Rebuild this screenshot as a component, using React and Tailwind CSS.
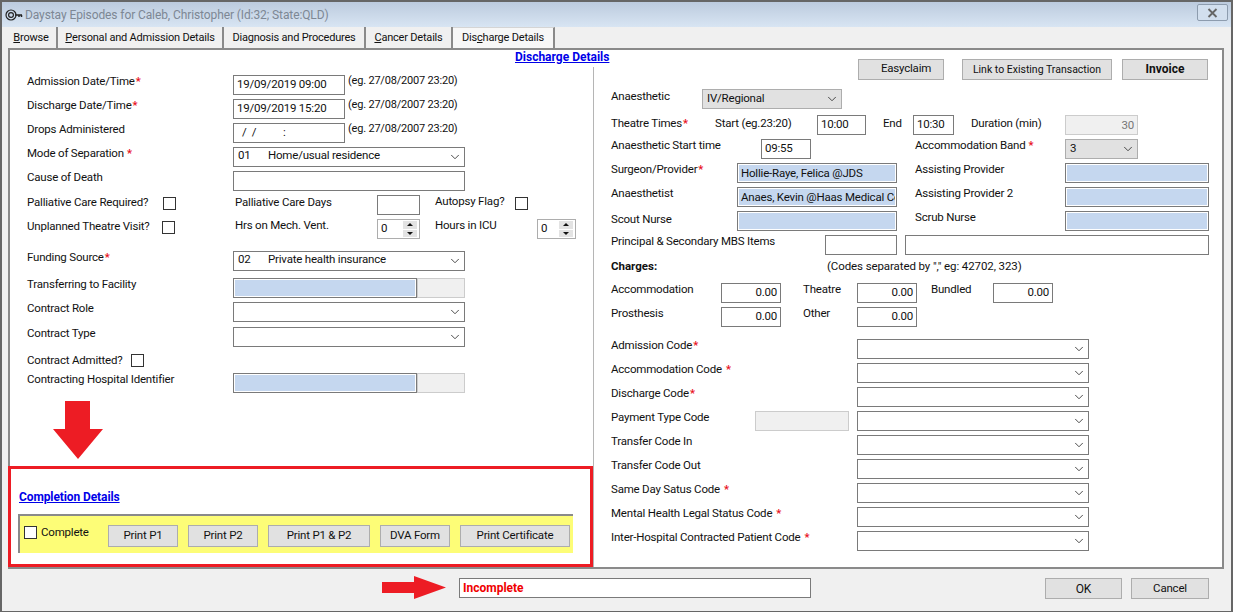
import React from 'react'
import { ChevronDown } from 'lucide-react'

const Star = () => <span className="text-[#e8101c] font-bold text-[11px]">*</span>

const Label = ({ className = '', children, star, gap = 'ml-[1px]' }) => (
  <div className={`shrink-0 -mt-[1px] leading-[15px] whitespace-nowrap ${className}`}>
    {children}
    {star && <span className={gap}><Star /></span>}
  </div>
)

const Input = ({ className = '', children, right }) => (
  <div className={`shrink-0 h-[20px] bg-white border border-[#7a7a7a] leading-[17px] px-[3px] whitespace-nowrap overflow-hidden ${right ? 'text-right' : ''} ${className}`}>
    {children}
  </div>
)

const Picker = ({ className = '', gray, children }) => (
  <div className={`shrink-0 h-[20px] flex items-center justify-between pl-[4px] pr-[2px] border ${gray ? 'bg-[#e1e1e1] border-[#adadad]' : 'bg-white border-[#7a7a7a]'} ${className}`}>
    <span className={`whitespace-nowrap flex ${gray ? '' : '-mt-[2px]'}`}>{children}</span>
    <ChevronDown size={14} strokeWidth={1.5} className="text-[#333]" />
  </div>
)

const Lookup = ({ className = '', children }) => (
  <div className={`shrink-0 h-[20px] bg-[#c5d7ef] border border-[#7a7a7a] outline outline-1 -outline-offset-2 outline-white leading-[19px] px-[3px] whitespace-nowrap overflow-hidden ${className}`}>
    {children}
  </div>
)

const Disabled = ({ className = '', children }) => (
  <div className={`shrink-0 h-[20px] bg-[#f0f0f0] border border-[#cccccc] leading-[18px] px-[3px] text-right text-[#777] ${className}`}>
    {children}
  </div>
)

const Check = ({ className = '' }) => (
  <div className={`shrink-0 w-[13px] h-[13px] bg-white border border-[#333] ${className}`} />
)

const Spinner = ({ className = '' }) => (
  <div className={`shrink-0 h-[20px] flex items-center justify-between bg-white border border-[#adadad] pl-[3px] pr-[2px] ${className}`}>
    <span>0</span>
    <div className="flex flex-col gap-[1px]">
      <div className="w-[14px] h-[7.5px] bg-[#e3e3e3] flex items-center justify-center">
        <svg width="6" height="3" viewBox="0 0 6 3"><path d="M3 0L6 3H0z" fill="#111" /></svg>
      </div>
      <div className="w-[14px] h-[7.5px] bg-[#e3e3e3] flex items-center justify-center">
        <svg width="6" height="3" viewBox="0 0 6 3"><path d="M3 3L6 0H0z" fill="#111" /></svg>
      </div>
    </div>
  </div>
)

const Btn = ({ className = '', children }) => (
  <div className={`shrink-0 flex items-center justify-center bg-[#e1e1e1] border border-[#adadad] whitespace-nowrap ${className}`}>
    {children}
  </div>
)

const Tab = ({ active, className = '', children }) => (
  <div className={`h-[21px] pt-[1px] flex items-center justify-center border-r-2 border-[#8a8a8a] whitespace-nowrap text-[11px] ${active ? 'bg-[#f7f7f7] border-t border-t-[#d5d5d5]' : 'bg-[#f0f0f0]'} ${className}`}>
    {children}
  </div>
)

const Row = ({ className = '', children }) => (
  <div className={`flex items-start h-[20px] ${className}`}>{children}</div>
)

const codeRows = [
  { label: 'Admission Code', star: true },
  { label: 'Accommodation Code', star: true, gap: 'ml-[4px]' },
  { label: 'Discharge Code', star: true },
  { label: 'Payment Type Code', box: true },
  { label: 'Transfer Code In' },
  { label: 'Transfer Code Out' },
  { label: 'Same Day Satus Code', star: true, gap: 'ml-[4px]' },
  { label: 'Mental Health Legal Status Code', star: true, gap: 'ml-[4px]' },
  { label: 'Inter-Hospital Contracted Patient Code', star: true, gap: 'ml-[4px]' },
]

const Example = () => <span className="ml-[3px] -mt-[1px] leading-[14px] text-[11px]">(eg. 27/08/2007 23:20)</span>

export default function App() {
  return (
    <div className="relative w-[1233px] h-[612px] overflow-hidden bg-[#f0f0f0] border-2 border-[#666] border-b-[1px] text-[11.5px] tracking-[-0.2px] text-[#111] flex flex-col font-['Roboto',Arial,sans-serif]">
      {/* Title bar */}
      <div className="h-[25px] shrink-0 flex items-center justify-between pl-[3px] pr-[3px] bg-gradient-to-b from-[#bccbde] to-[#d8e5f3]">
        <div className="flex items-center gap-[2px]">
          <svg width="18" height="12" viewBox="0 0 18 12" fill="none" stroke="#222">
            <circle cx="6" cy="6" r="5" strokeWidth="1.2" />
            <circle cx="6" cy="6" r="2.4" strokeWidth="1.2" />
            <path d="M10 6h7M14 6v2M16.5 6v2" strokeWidth="1.5" />
          </svg>
          <span className="text-[#7d8794] text-[12px] tracking-[-0.1px]">Daystay Episodes for Caleb, Christopher (Id:32; State:QLD)</span>
        </div>
        <div className="w-[31px] h-[17px] mt-[-4px] flex items-center justify-center rounded-[2px] border border-[#8d9cae] bg-[#d2dfee]">
          <svg width="11" height="10" viewBox="0 0 11 10" fill="none" stroke="#666" strokeWidth="1.8"><path d="M1.5 1l8 8M9.5 1l-8 8" /></svg>
        </div>
      </div>

      {/* Tabs */}
      <div className="h-[21px] shrink-0 flex items-end pl-[4px]">
        <Tab className="w-[52px]"><span><u>B</u>rowse</span></Tab>
        <Tab className="w-[166px]"><span><u>P</u>ersonal and Admission Details</span></Tab>
        <Tab className="w-[142px]"><span>Dia<u>g</u>nosis and Procedures</span></Tab>
        <Tab className="w-[87px]"><span><u>C</u>ancer Details</span></Tab>
        <Tab active className="w-[102px]"><span>Dis<u>c</u>harge Details</span></Tab>
      </div>

      {/* Main panel */}
      <div className="relative ml-[6px] mr-[7px] h-[521px] shrink-0 bg-white border-2 border-[#8a8a8a] flex flex-col">
        <div className="h-[17px] shrink-0 pl-[505px] font-bold text-[12px] tracking-normal text-[#0000e8] underline leading-[15px]">Discharge Details</div>
        <div className="flex-1 flex min-h-0">
          {/* Left column */}
          <div className="w-[583px] shrink-0 flex flex-col">
            <div className="pl-[17px] pt-[8px]">
              <Row><Label className="w-[206px]" star>Admission Date/Time</Label><Input className="w-[112px]">19/09/2019 09:00</Input><Example /></Row>
              <Row className="mt-[4px]"><Label className="w-[206px]" star>Discharge Date/Time</Label><Input className="w-[112px]">19/09/2019 15:20</Input><Example /></Row>
              <Row className="mt-[4px]"><Label className="w-[206px]">Drops Administered</Label><Input className="w-[112px] pl-[8px]">{'/ /     :'.replace(/ /g, '\u00a0\u00a0')}</Input><Example /></Row>
              <Row className="mt-[4px]"><Label className="w-[206px]" star gap="ml-[3px]">Mode of Separation</Label><Picker className="w-[232px]"><span className="w-[30px]">01</span>Home/usual residence</Picker></Row>
              <Row className="mt-[4px]"><Label className="w-[206px]">Cause of Death</Label><Input className="w-[232px]" /></Row>

              <Row className="mt-[4px]">
                <Label className="w-[136px] pt-[1px]">Palliative Care Required?</Label>
                <Check className="mt-[2px]" />
                <Label className="ml-[59px] w-[142px] pt-[1px]">Palliative Care Days</Label>
                <Input className="w-[43px]" />
                <Label className="ml-[15px] w-[80px]">Autopsy Flag?</Label>
                <Check className="mt-[2px]" />
              </Row>
              <Row className="mt-[4px]">
                <Label className="w-[135px] pt-[1px]">Unplanned Theatre Visit?</Label>
                <Check className="mt-[2px]" />
                <Label className="ml-[60px] w-[142px]">Hrs on Mech. Vent.</Label>
                <Spinner className="w-[43px]" />
                <Label className="ml-[15px] w-[102px]">Hours in ICU</Label>
                <Spinner className="w-[39px]" />
              </Row>

              <Row className="mt-[12px]"><Label className="w-[206px]" star>Funding Source</Label><Picker className="w-[232px]"><span className="w-[30px]">02</span>Private health insurance</Picker></Row>
              <Row className="mt-[7px]"><Label className="w-[206px]">Transferring to Facility</Label><Lookup className="w-[184px]" /><Disabled className="w-[48px]" /></Row>
              <Row className="mt-[4px]"><Label className="w-[206px]">Contract Role</Label><Picker className="w-[232px]" /></Row>
              <Row className="mt-[5px]"><Label className="w-[206px]">Contract Type</Label><Picker className="w-[232px]" /></Row>
              <Row className="mt-[6px]"><Label className="w-[104px] pt-[1px]">Contract Admitted?</Label><Check className="mt-[1px]" /></Row>
              <Row><Label className="w-[206px]">Contracting Hospital Identifier</Label><Lookup className="w-[184px]" /><Disabled className="w-[48px]" /></Row>
            </div>

            {/* Completion section */}
            <div className="mt-auto ml-[-2px] h-[101px] border-[3px] border-[#ed1c24] pl-[8px] flex flex-col">
              <div className="mt-[21px] h-[18px] font-bold text-[12px] tracking-[-0.1px] text-[#0000e8] underline leading-[15px]">Completion Details</div>
              <div className="mt-[6px] ml-[-1px] w-[555px] h-[39px] bg-[#fdfd77] border-t-2 border-l-2 border-[#8a8a8a] flex items-start pl-[4px] pt-[9px]">
                <Check className="mt-[1px]" />
                <Label className="ml-[4px] w-[67px] pt-[1px]">Complete</Label>
                <Btn className="w-[70px] h-[22px]">Print P1</Btn>
                <Btn className="ml-[10px] w-[70px] h-[22px]">Print P2</Btn>
                <Btn className="ml-[10px] w-[102px] h-[22px]">Print P1 &amp; P2</Btn>
                <Btn className="ml-[10px] w-[70px] h-[22px]">DVA Form</Btn>
                <Btn className="ml-[10px] w-[110px] h-[22px]">Print Certificate</Btn>
              </div>
            </div>
          </div>

          {/* Right column */}
          <div className="flex-1 border-l border-[#b5b5b5] pl-[17px] flex flex-col">
            <div className="mt-[-8px] flex pl-[247px]">
              <Btn className="w-[86px] h-[21px] pb-[2px] pl-[10px]">Easyclaim</Btn>
              <Btn className="ml-[18px] w-[150px] h-[21px] text-[10.5px] tracking-normal">Link to Existing Transaction</Btn>
              <Btn className="ml-[10px] w-[86px] h-[21px] pb-[2px] font-bold text-[12px] tracking-normal">Invoice</Btn>
            </div>
            <Row className="mt-[9px]"><Label className="w-[91px] pt-[1px]">Anaesthetic</Label><Picker gray className="w-[140px]">IV/Regional</Picker></Row>
            <Row className="mt-[6px]">
              <Label className="w-[104px] pt-[2px]" star>Theatre Times</Label>
              <Label className="w-[102px] pt-[2px]">Start (eg.23:20)</Label>
              <Input className="w-[49px]">10:00</Input>
              <Label className="ml-[17px] w-[30px] pt-[2px]">End</Label>
              <Input className="w-[41px]">10:30</Input>
              <Label className="ml-[17px] w-[94px] pt-[2px]">Duration (min)</Label>
              <Disabled className="w-[73px]">30</Disabled>
            </Row>
            <Row className="mt-[4px]">
              <Label className="w-[150px]">Anaesthetic Start time</Label>
              <Input className="w-[50px]">09:55</Input>
              <Label className="ml-[104px] w-[150px]" star gap="ml-[3px]">Accommodation Band</Label>
              <Picker gray className="w-[73px]">3</Picker>
            </Row>
            <Row className="mt-[4px]">
              <Label className="w-[126px]" star>Surgeon/Provider</Label>
              <Lookup className="w-[160px]">Hollie-Raye, Felica @JDS</Lookup>
              <Label className="ml-[18px] w-[150px]">Assisting Provider</Label>
              <Lookup className="w-[144px]" />
            </Row>
            <Row className="mt-[4px]">
              <Label className="w-[126px]">Anaesthetist</Label>
              <Lookup className="w-[160px]">Anaes, Kevin @Haas Medical Centre</Lookup>
              <Label className="ml-[18px] w-[150px]">Assisting Provider 2</Label>
              <Lookup className="w-[144px]" />
            </Row>
            <Row className="mt-[4px]">
              <Label className="w-[126px] pt-[2px]">Scout Nurse</Label>
              <Lookup className="w-[160px]" />
              <Label className="ml-[18px] w-[150px]">Scrub Nurse</Label>
              <Lookup className="w-[144px]" />
            </Row>
            <Row className="mt-[4px]">
              <Label className="w-[214px]">Principal &amp; Secondary MBS Items</Label>
              <Input className="w-[72px]" />
              <Input className="ml-[8px] w-[304px]" />
            </Row>
            <div className="mt-[4px] h-[14px] flex leading-[14px]">
              <span className="w-[216px] font-bold tracking-normal">Charges:</span>
              <span className="tracking-[-0.1px]">(Codes separated by "," eg: 42702, 323)</span>
            </div>
            <Row className="mt-[10px]">
              <Label className="w-[110px]">Accommodation</Label>
              <Input right className="w-[60px]">0.00</Input>
              <Label className="ml-[22px] w-[54px]">Theatre</Label>
              <Input right className="w-[60px]">0.00</Input>
              <Label className="ml-[14px] w-[62px]">Bundled</Label>
              <Input right className="w-[60px]">0.00</Input>
            </Row>
            <Row className="mt-[4px]">
              <Label className="w-[110px]">Prosthesis</Label>
              <Input right className="w-[60px]">0.00</Input>
              <Label className="ml-[22px] w-[54px]">Other</Label>
              <Input right className="w-[60px]">0.00</Input>
            </Row>
            <div className="mt-[12px] flex flex-col gap-[4px]">
              {codeRows.map((r) => (
                <Row key={r.label}>
                  <Label className="w-[144px]" star={r.star} gap={r.gap}>{r.label}</Label>
                  {r.box ? <Disabled className="w-[94px]" /> : <div className="w-[94px] shrink-0" />}
                  <Picker className="ml-[8px] w-[232px]" />
                </Row>
              ))}
            </div>
          </div>
        </div>

        {/* Annotation arrow pointing at the completion section */}
        <svg className="absolute left-[43px] top-[351px]" width="50" height="58" viewBox="0 0 50 58">
          <path d="M12 0H37V28H50L25 58L0 28H12z" fill="#ed1c24" />
        </svg>
      </div>

      {/* Bottom bar */}
      <div className="flex-1 flex items-start pl-[380px] pt-[9px]">
        <svg className="mt-[-2px]" width="64" height="23" viewBox="0 0 64 23">
          <path d="M0 6H32V0L64 11.5L32 23V17H0z" fill="#ed1c24" />
        </svg>
        <div className="ml-[13px] w-[352px] h-[20px] bg-white border border-[#7a7a7a] pl-[3px] font-bold text-[12px] tracking-normal text-[#f00000] leading-[18px]">Incomplete</div>
        <Btn className="ml-[234px] w-[77px] h-[21px] text-[12px]">OK</Btn>
        <Btn className="ml-[9px] w-[78px] h-[21px]">Cancel</Btn>
      </div>
    </div>
  )
}
